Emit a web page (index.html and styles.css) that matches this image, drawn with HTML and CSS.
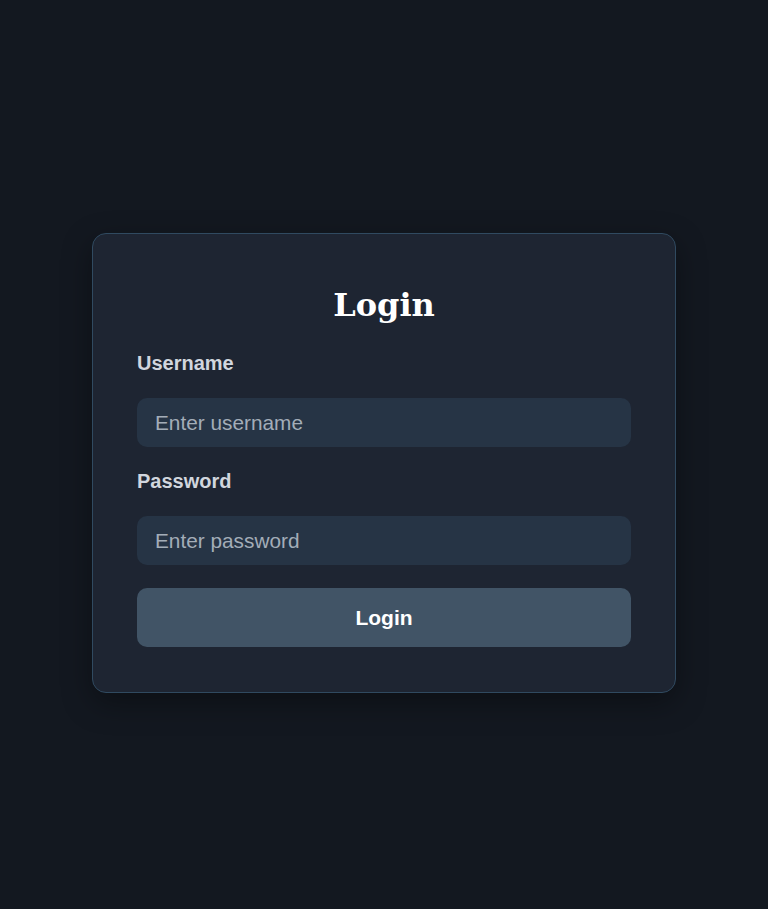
FILE: index.html
```html
<!DOCTYPE html>
<html lang="en">
<head>
<meta charset="utf-8">
<title>Login</title>
<link rel="stylesheet" href="styles.css">
</head>
<body>
<main class="page">
  <form class="card">
    <h1 class="title">Login</h1>
    <label class="label" for="username">Username</label>
    <input class="input" id="username" type="text" placeholder="Enter username">
    <label class="label" for="password">Password</label>
    <input class="input" id="password" type="password" placeholder="Enter password">
    <button class="button" type="button">Login</button>
  </form>
</main>
</body>
</html>
```
FILE: styles.css
```css
html, body {
  margin: 0;
  padding: 0;
  background: #131820;
}
body {
  font-family: "Liberation Sans", Arial, sans-serif;
  color: #d3d9e1;
}
.page {
  min-height: 909px;
  display: flex;
  justify-content: center;
  align-items: flex-start;
  padding-top: 233px;
  box-sizing: border-box;
}
.card {
  width: 584px;
  box-sizing: border-box;
  padding: 44px 44px 45px;
  background: #1e2532;
  border: 1px solid #304a60;
  border-radius: 14px;
  box-shadow: 0 10px 30px rgba(0, 0, 0, 0.35);
  display: flex;
  flex-direction: column;
}
.title {
  margin: 0 0 28px;
  padding-top: 8px;
  font-family: "DejaVu Serif", "Liberation Serif", serif;
  font-weight: 700;
  font-size: 32px;
  line-height: 38px;
  text-align: center;
  color: #ffffff;
}
.label {
  font-size: 20px;
  line-height: 23px;
  font-weight: 700;
  color: #d1d6de;
  margin-bottom: 23px;
}
.input {
  height: 49px;
  box-sizing: border-box;
  border: none;
  outline: none;
  border-radius: 10px;
  background: #263445;
  padding: 0 18px;
  font-family: "Liberation Sans", Arial, sans-serif;
  font-size: 20.8px;
  color: #e5e9ef;
  margin: 0 0 23px;
}
.input::placeholder {
  color: #a3adb8;
}
.button {
  height: 59px;
  border: none;
  border-radius: 10px;
  background: #415466;
  color: #ffffff;
  font-family: "Liberation Sans", Arial, sans-serif;
  font-size: 21px;
  font-weight: 700;
  cursor: pointer;
}
```
